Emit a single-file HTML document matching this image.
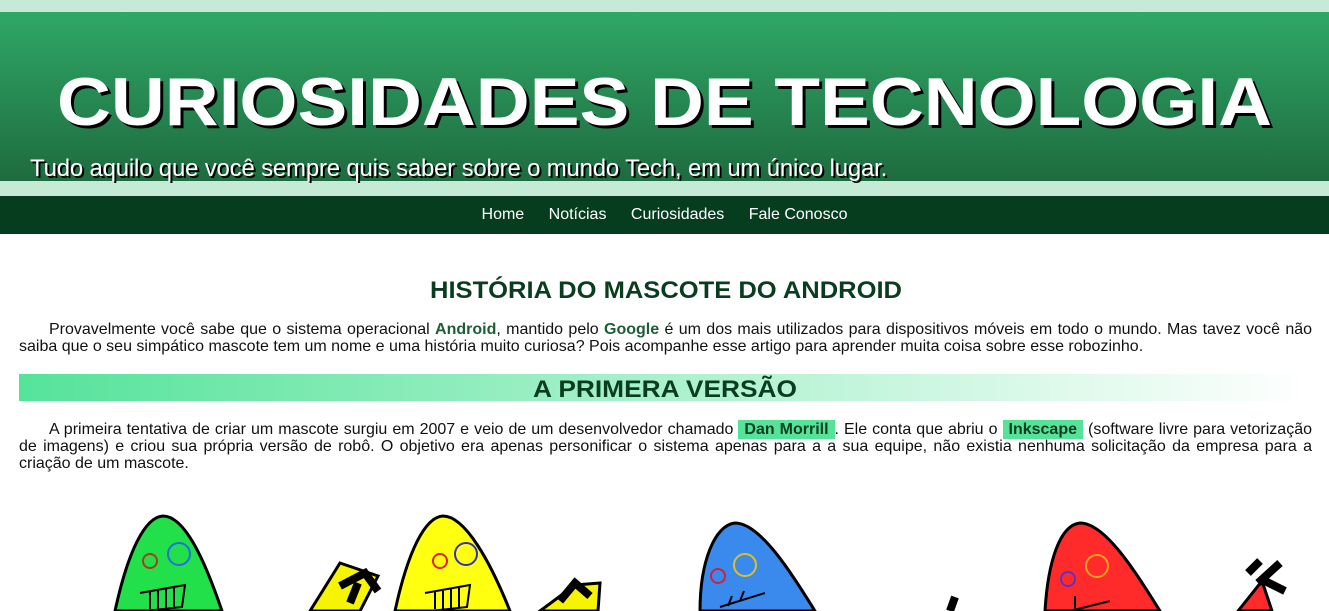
<!DOCTYPE html>
<html><head><meta charset="utf-8"><style>
*{margin:0;padding:0;box-sizing:border-box}
body{width:1329px;height:611px;overflow:hidden;background:#fff;font-family:"Liberation Sans",Arial,sans-serif;color:#111;position:relative}
.top{height:12px;background:#c5ead5}
.hdr{height:169px;background:linear-gradient(#2fa866,#1e6b3f);position:relative}
.hdr svg{position:absolute;left:0;top:0}
.sub{position:absolute;left:30px;top:143px;font-size:24px;color:#fff;text-shadow:2px 2px 0 #000;letter-spacing:-0.2px}
.band{height:15px;background:#c5ead5}
nav{height:38px;background:#073d1f;text-align:center;padding-top:10px;font-size:16px}
nav a{color:#fff;text-decoration:none;margin:0 10px}
p{font-size:16px;line-height:17px;text-align:justify;text-indent:30px;position:absolute;left:19px;width:1293px}
b.g{color:#1e5e36}
.hl{background:#55e39a;font-weight:bold;color:#0a3d20;padding:1px 6px}
.h2{position:absolute;top:374px;left:19px;width:1291px;height:27px;background:linear-gradient(90deg,#55e39a,#fff)}
</style></head><body>
<div class="top"></div>
<div class="hdr">
<svg width="1329" height="169">
<text x="60" y="116" font-family="Liberation Sans" font-weight="bold" font-size="68" fill="#000" textLength="1215" lengthAdjust="spacingAndGlyphs">CURIOSIDADES DE TECNOLOGIA</text>
<text x="57" y="113" font-family="Liberation Sans" font-weight="bold" font-size="68" fill="#fff" textLength="1215" lengthAdjust="spacingAndGlyphs">CURIOSIDADES DE TECNOLOGIA</text>
</svg>
<div class="sub">Tudo aquilo que você sempre quis saber sobre o mundo Tech, em um único lugar.</div>
</div>
<div class="band"></div>
<nav><a>Home</a> <a>Notícias</a> <a>Curiosidades</a> <a>Fale Conosco</a></nav>
<svg width="1329" height="40" style="position:absolute;top:270px;left:0"><text x="430" y="28" font-family="Liberation Sans" font-weight="bold" font-size="24" fill="#0a3d20" textLength="472" lengthAdjust="spacingAndGlyphs">HISTÓRIA DO MASCOTE DO ANDROID</text></svg>
<p style="top:321px">Provavelmente você sabe que o sistema operacional <b class="g">Android</b>, mantido pelo <b class="g">Google</b> é um dos mais utilizados para dispositivos móveis em todo o mundo. Mas tavez você não saiba que o seu simpático mascote tem um nome e uma história muito curiosa? Pois acompanhe esse artigo para aprender muita coisa sobre esse robozinho.</p>
<div class="h2"><svg width="1291" height="27"><text x="514" y="23" font-family="Liberation Sans" font-weight="bold" font-size="24" fill="#0a3d20" textLength="264" lengthAdjust="spacingAndGlyphs">A PRIMERA VERSÃO</text></svg></div>
<p style="top:421px">A primeira tentativa de criar um mascote surgiu em 2007 e veio de um desenvolvedor chamado <span class="hl">Dan Morrill</span>. Ele conta que abriu o <span class="hl">Inkscape</span> (software livre para vetorização de imagens) e criou sua própria versão de robô. O objetivo era apenas personificar o sistema apenas para a a sua equipe, não existia nenhuma solicitação da empresa para a criação de um mascote.</p>
<svg width="1329" height="100" style="position:absolute;top:511px;left:0" stroke="#000" stroke-width="3">
<path d="M115 100 C128 40 145 6 163 5 C185 5 205 50 222 100Z" fill="#22e04a"/>
<path d="M310 100 L340 52 L378 65 L360 100Z" fill="#f7f400"/>
<path d="M395 100 C408 40 425 6 443 5 C465 5 490 50 510 100Z" fill="#ffff10"/>
<path d="M540 100 L575 74 L600 72 L598 100Z" fill="#f7f400"/>
<path d="M700 100 C700 50 715 14 735 12 C760 12 790 60 815 100Z" fill="#3a8aee"/>
<path d="M1045 100 C1048 50 1060 14 1080 12 C1105 12 1135 60 1160 100Z" fill="#ff2b2b"/>
<path d="M1238 100 L1262 70 L1272 100Z" fill="#ff2b2b"/>
<g stroke-width="2" fill="none">
<circle cx="150" cy="50" r="7" stroke="#a04020"/><circle cx="179" cy="43" r="11" stroke="#2070e0"/>
<circle cx="440" cy="50" r="7" stroke="#e02020"/><circle cx="466" cy="43" r="11" stroke="#3030c0"/>
<circle cx="718" cy="65" r="7" stroke="#d02040"/><circle cx="745" cy="54" r="11" stroke="#e0c020"/>
<circle cx="1068" cy="68" r="7" stroke="#6030c0"/><circle cx="1097" cy="55" r="11" stroke="#ffa020"/>
</g>
<g stroke-width="2" fill="none">
<path d="M140 82 L185 74 L182 96 L145 100 M150 80 L150 98 M158 79 L158 98 M166 78 L166 97 M174 77 L174 96"/>
<path d="M425 82 L470 74 L467 96 L430 100 M435 80 L435 98 M443 79 L443 98 M451 78 L451 97 M459 77 L459 96"/>
<path d="M720 96 L765 82 M728 95 L732 85 M740 90 L744 80"/>
<path d="M1070 100 L1110 90 M1075 100 L1075 85"/>
</g>
<path d="M340 75 L365 62 L378 80 M350 92 L358 72 M560 90 L575 72 L590 85 M950 100 L955 86 M1258 72 L1280 52 M1248 62 L1260 50 M1265 70 L1285 80" stroke-width="8" fill="none"/>
</svg>
</body></html>
